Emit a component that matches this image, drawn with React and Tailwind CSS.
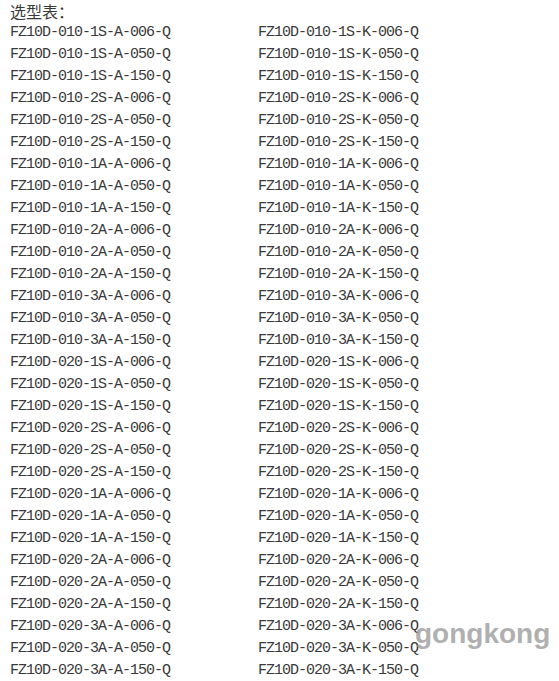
import React from 'react';

const sizes = ['010', '020'];
const types = ['1S', '2S', '1A', '2A', '3A'];
const lengths = ['006', '050', '150'];

const rows = [];
sizes.forEach((s) => {
  types.forEach((t) => {
    lengths.forEach((l) => {
      rows.push([`FZ10D-${s}-${t}-A-${l}-Q`, `FZ10D-${s}-${t}-K-${l}-Q`]);
    });
  });
});

export default function App() {
  return (
    <div className="relative w-[559px] h-[681px] bg-white overflow-hidden text-[#3a3a3a]">
      <div className="pl-[10px] leading-[22px]">
        <div className="text-[16px] font-['Noto_Sans_CJK_SC',sans-serif] leading-[22px]">选型表：</div>
        {rows.map(([a, b]) => (
          <div key={a} className="grid grid-cols-[248px_1fr] font-['Liberation_Mono',monospace] text-[15px] tracking-[-1px]">
            <span>{a}</span>
            <span>{b}</span>
          </div>
        ))}
      </div>
      <div className="absolute left-[415px] top-[620px] font-['Liberation_Sans',Arial,sans-serif] font-bold text-[28px] text-[#9a9a9a]/80 leading-none">
        gongkong
      </div>
    </div>
  );
}
